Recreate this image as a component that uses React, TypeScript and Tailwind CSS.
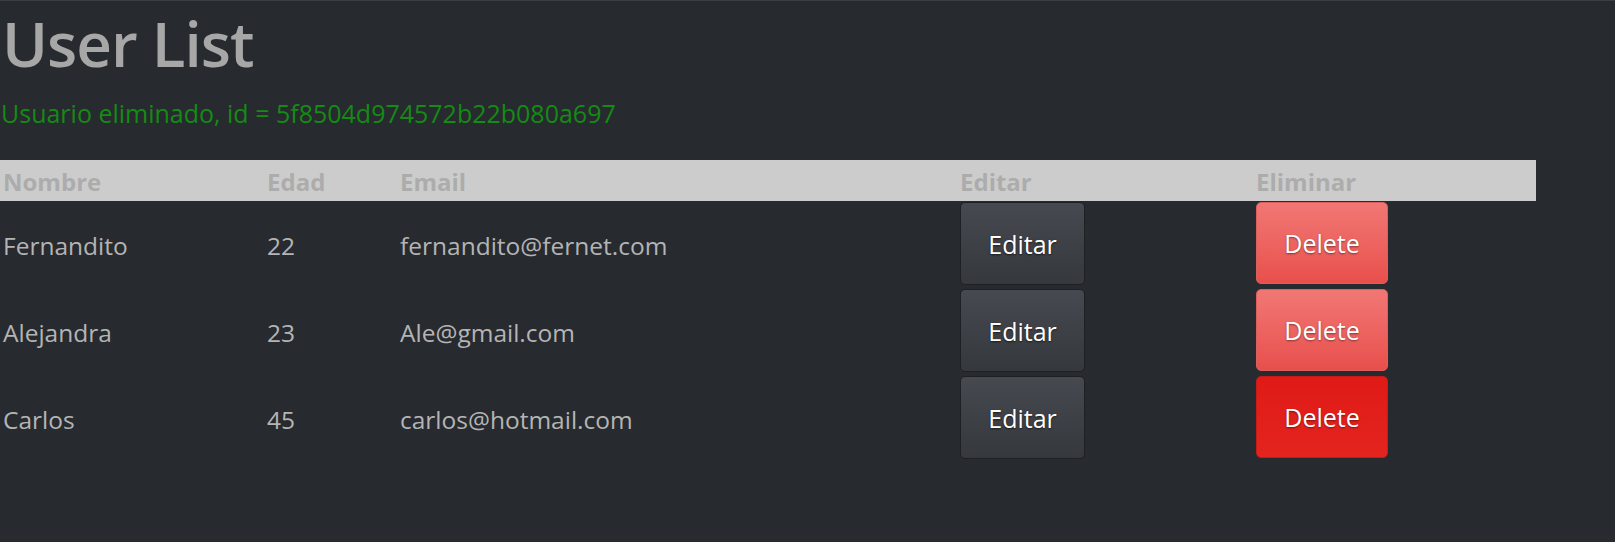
import React from "react"

type User = { nombre: string; edad: number; email: string; strong?: boolean }

const users: User[] = [
  { nombre: "Fernandito", edad: 22, email: "fernandito@fernet.com" },
  { nombre: "Alejandra", edad: 23, email: "Ale@gmail.com" },
  { nombre: "Carlos", edad: 45, email: "carlos@hotmail.com", strong: true },
]

const cols = "grid grid-cols-[264px_133px_560px_296px_1fr] w-[1536px]"

export default function App() {
  return (
    <div className="min-h-[542px] bg-[#272a2f] border-t border-[#3b3e44] font-['Open_Sans',sans-serif] text-[#b4b4b4]">
      <h1 className="pl-[2px] pt-[5px] text-[62px] leading-[74px] tracking-[-1px] font-semibold text-[#a7a7a7]">User List</h1>
      <p className="pl-[1px] pt-[17px] text-[25px] leading-[32px] text-[#158a15]">
        Usuario eliminado, id = 5f8504d974572b22b080a697
      </p>

      <div className="mt-[31px]">
        <div className={`${cols} h-[41px] items-center bg-[#cccccc] pt-[2px] text-[24px] font-bold text-[#acacac]`}>
          <div className="pl-[3px]">Nombre</div>
          <div className="pl-[3px]">Edad</div>
          <div className="pl-[3px]">Email</div>
          <div className="pl-[3px]">Editar</div>
          <div className="pl-[3px]">Eliminar</div>
        </div>

        {users.map((u) => (
          <div key={u.nombre} className={`${cols} h-[87px] items-start pt-[1px] text-[24.5px]`}>
            <div className="pl-[3px] pt-[3px] self-center">{u.nombre}</div>
            <div className="pl-[3px] pt-[3px] self-center">{u.edad}</div>
            <div className="pl-[3px] pt-[3px] self-center">{u.email}</div>
            <div className="pl-[3px]">
              <button className="h-[83px] w-[125px] rounded-[5px] border border-[#1e2023] bg-gradient-to-b from-[#46494f] to-[#35383d] pt-[2px] text-[25px] text-white [text-shadow:0_1px_2px_rgba(0,0,0,0.6)]">
                Editar
              </button>
            </div>
            <div className="pl-[3px]">
              {u.strong ? (
                <button className="h-[82px] w-[132px] rounded-[5px] border border-[#c81b16] bg-gradient-to-b from-[#e01a16] to-[#e3241f] pt-[2px] text-[25px] text-white [text-shadow:0_1px_2px_rgba(0,0,0,0.45)]">
                  Delete
                </button>
              ) : (
                <button className="h-[82px] w-[132px] rounded-[5px] border border-[#d9605d] bg-gradient-to-b from-[#f17774] to-[#e84f4c] pt-[2px] text-[25px] text-white [text-shadow:0_1px_2px_rgba(0,0,0,0.45)]">
                  Delete
                </button>
              )}
            </div>
          </div>
        ))}
      </div>
    </div>
  )
}
